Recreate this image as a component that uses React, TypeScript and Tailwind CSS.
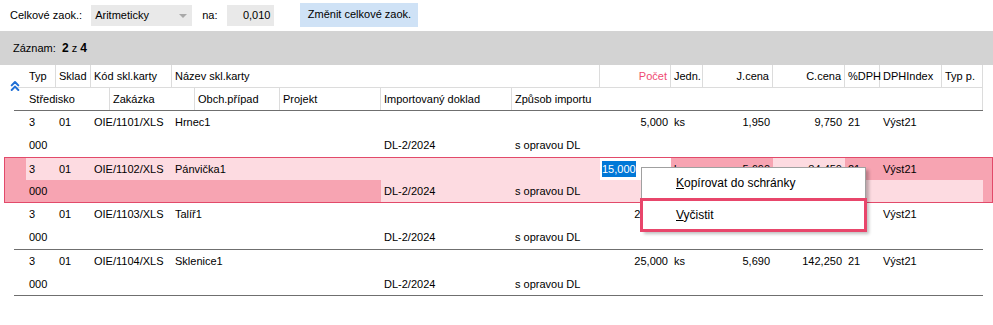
import React from 'react';
import { ChevronsUp } from 'lucide-react';

type Rec = {
  typ: string;
  sklad: string;
  kod: string;
  nazev: string;
  pocet: string;
  jedn: string;
  jcena: string;
  ccena: string;
  dph: string;
  idx: string;
  str: string;
  doklad: string;
  zpusob: string;
};

const records: Rec[] = [
  { typ: '3', sklad: '01', kod: 'OIE/1101/XLS', nazev: 'Hrnec1', pocet: '5,000', jedn: 'ks', jcena: '1,950', ccena: '9,750', dph: '21', idx: 'Výst21', str: '000', doklad: 'DL-2/2024', zpusob: 's opravou DL' },
  { typ: '3', sklad: '01', kod: 'OIE/1102/XLS', nazev: 'Pánvička1', pocet: '15,000', jedn: 'ks', jcena: '5,690', ccena: '84,450', dph: '21', idx: 'Výst21', str: '000', doklad: 'DL-2/2024', zpusob: 's opravou DL' },
  { typ: '3', sklad: '01', kod: 'OIE/1103/XLS', nazev: 'Talíř1', pocet: '25,000', jedn: 'ks', jcena: '5,690', ccena: '142,250', dph: '21', idx: 'Výst21', str: '000', doklad: 'DL-2/2024', zpusob: 's opravou DL' },
  { typ: '3', sklad: '01', kod: 'OIE/1104/XLS', nazev: 'Sklenice1', pocet: '25,000', jedn: 'ks', jcena: '5,690', ccena: '142,250', dph: '21', idx: 'Výst21', str: '000', doklad: 'DL-2/2024', zpusob: 's opravou DL' },
];

// first line of a record
const top = [
  { w: 'w-[30px]', label: 'Typ', key: 'typ' },
  { w: 'w-[35px]', label: 'Sklad', key: 'sklad' },
  { w: 'w-[81px]', label: 'Kód skl.karty', key: 'kod' },
  { w: 'w-[428px]', label: 'Název skl.karty', key: 'nazev' },
  { w: 'w-[71px]', label: 'Počet', key: 'pocet', right: true },
  { w: 'w-[32px]', label: 'Jedn.', key: 'jedn' },
  { w: 'w-[70px]', label: 'J.cena', key: 'jcena', right: true },
  { w: 'w-[72px]', label: 'C.cena', key: 'ccena', right: true },
  { w: 'w-[35px]', label: '%DPH', key: 'dph' },
  { w: 'w-[62px]', label: 'DPHIndex', key: 'idx' },
  { w: 'w-[41px]', label: 'Typ p.', key: '' },
] as const;

// second line of a record
const bottom = [
  { w: 'w-[84px]', label: 'Středisko', key: 'str' },
  { w: 'w-[85px]', label: 'Zakázka', key: '' },
  { w: 'w-[85px]', label: 'Obch.případ', key: '' },
  { w: 'w-[101px]', label: 'Projekt', key: '' },
  { w: 'w-[131px]', label: 'Importovaný doklad', key: 'doklad' },
  { w: 'w-[471px]', label: 'Způsob importu', key: 'zpusob' },
] as const;

// light cells of the selected record
const selTop = ['bg-[#fddbe1]', 'bg-[#fddbe1]', 'bg-[#fddbe1]', 'bg-[#fddbe1]', 'bg-white', '', '', 'bg-[#fddbe1]', '', '', ''];
const selBottom = ['', '', '', '', 'bg-[#fddbe1]', 'bg-[#fddbe1]'];

const val = (r: Rec, key: string) => (key ? (r as Record<string, string>)[key] : '');

const Record: React.FC<{ r: Rec; line?: boolean; h2?: string }> = ({ r, line = true, h2 = 'h-[23px]' }) => (
  <div className={`ml-[14px] w-[969px] ${line ? 'border-b border-[#6f6f6f]' : ''}`}>
    <div className="flex h-[23px] items-center pl-[12px]">
      {top.map((c) => (
        <div key={c.label} className={`${c.w} shrink-0 px-[3px] whitespace-nowrap ${'right' in c ? 'text-right' : ''}`}>
          {val(r, c.key)}
        </div>
      ))}
    </div>
    <div className={`flex ${h2} items-center pl-[12px]`}>
      {bottom.map((c) => (
        <div key={c.label} className={`${c.w} shrink-0 px-[3px] whitespace-nowrap`}>
          {val(r, c.key)}
        </div>
      ))}
    </div>
  </div>
);

const Selected: React.FC<{ r: Rec }> = ({ r }) => (
  <div className="ml-[4px] w-[989px] border border-[#e24a6a] bg-[#f7a4b2]">
    <div className="flex h-[22px] pl-[21px]">
      {top.map((c, i) => (
        <div key={c.label} className={`${c.w} ${selTop[i]} shrink-0 flex items-center px-[3px] whitespace-nowrap ${'right' in c ? 'justify-end' : ''}`}>
          {c.key === 'pocet' ? (
            <span className="-ml-[1px] mr-auto bg-[#0078d7] text-white">{r.pocet}</span>
          ) : (
            val(r, c.key)
          )}
        </div>
      ))}
    </div>
    <div className="flex h-[22px] pl-[21px]">
      {bottom.map((c, i) => (
        <div key={c.label} className={`${c.w} ${selBottom[i]} shrink-0 flex items-center px-[3px] whitespace-nowrap`}>
          {val(r, c.key)}
        </div>
      ))}
    </div>
  </div>
);

const App: React.FC = () => {
  return (
    <div className="relative w-[993px] h-[325px] overflow-hidden bg-white text-[11px] text-black font-['Liberation_Sans',Arial,sans-serif]">
      {/* rounding toolbar */}
      <div className="flex h-[31px] items-center pl-[10px]">
        <span>Celkové zaok.:</span>
        <div className="ml-[9px] flex h-[21px] w-[101px] items-center justify-between bg-[#e9e9e9] pl-[4px] pr-[5px]">
          <span>Aritmeticky</span>
          <span className="h-0 w-0 border-x-[4px] border-t-[4px] border-x-transparent border-t-[#a8a8a8]" />
        </div>
        <span className="ml-[10px]">na:</span>
        <div className="ml-[10px] flex h-[21px] w-[47px] items-center justify-end bg-[#e9e9e9] pr-[4px]">0,010</div>
        <button className="ml-[26px] h-[24px] w-[118px] -mt-[2px] bg-[#cfe2f6] text-black">Změnit celkové zaok.</button>
      </div>

      <div className="flex h-[34px] items-center bg-[#d3d3d3] pl-[13px]">
        Záznam:&nbsp;&nbsp;<b className="text-[12px]">2</b>&nbsp;z&nbsp;<b className="text-[12px]">4</b>
      </div>

      {/* grid header */}
      <div className="relative">
        <ChevronsUp className="absolute left-[7px] top-[13px] h-[16px] w-[16px] text-[#1f6fd6]" strokeWidth={3} />
        <div className="ml-[14px] w-[969px] border-b border-[#6f6f6f]">
          <div className="flex h-[23px] border-b border-[#dcdcdc] pl-[12px]">
            {top.map((c) => (
              <div
                key={c.label}
                className={`${c.w} shrink-0 flex items-center border-r border-[#dcdcdc] px-[3px] whitespace-nowrap ${'right' in c ? 'justify-end' : ''} ${c.key === 'pocet' ? 'text-[#ef4a72]' : ''}`}
              >
                {c.label}
              </div>
            ))}
          </div>
          <div className="flex h-[22px] pl-[12px]">
            {bottom.map((c) => (
              <div key={c.label} className={`${c.w} shrink-0 flex items-center border-r border-[#dcdcdc] px-[3px] whitespace-nowrap`}>
                {c.label}
              </div>
            ))}
          </div>
        </div>

        <Record r={records[0]} line={false} />
        <Selected r={records[1]} />
        <Record r={records[2]} />
        <Record r={records[3]} h2="h-[22px]" />
      </div>

      {/* context menu */}
      <div className="absolute left-[641px] top-[167px] w-[225px] border border-[#a0a0a0] bg-white text-[12px] shadow-[3px_3px_3px_rgba(0,0,0,0.25)]">
        <div className="flex h-[30px] items-center pl-[34px]">
          <span className="whitespace-nowrap">
            <span className="underline">K</span>opírovat do schránky
          </span>
        </div>
        <div className="-mx-[2px] -mb-[2px] flex h-[34px] items-center border-[3px] border-[#e8466b] pl-[33px]">
          <span className="whitespace-nowrap">
            <span className="underline">V</span>yčistit
          </span>
        </div>
      </div>
    </div>
  );
};

export default App;
